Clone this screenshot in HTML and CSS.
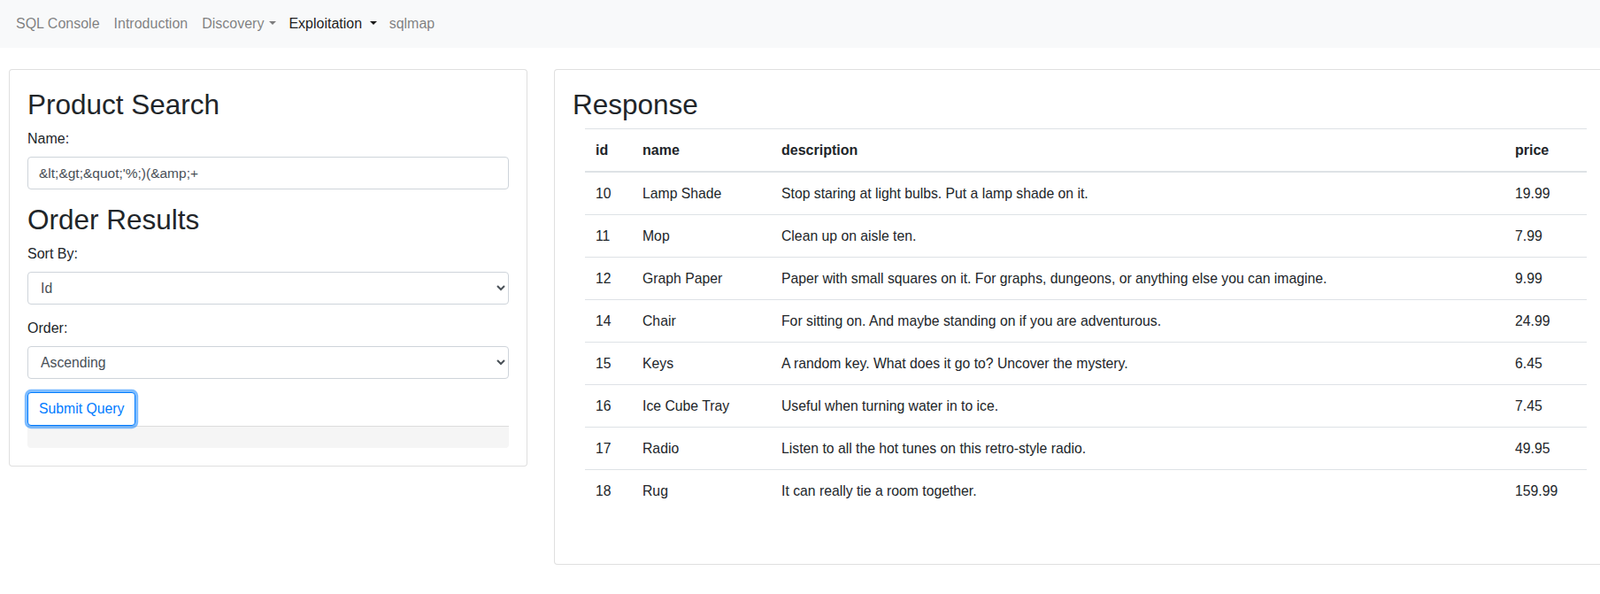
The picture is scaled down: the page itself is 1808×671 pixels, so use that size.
FILE: index.html
```html
<!DOCTYPE html>
<html lang="en">
<head>
<meta charset="utf-8">
<title>Product Search</title>
<link rel="stylesheet" href="styles.css">
</head>
<body>
<nav class="navbar">
  <a class="nav-link" href="#">SQL Console</a>
  <a class="nav-link" href="#">Introduction</a>
  <a class="nav-link dropdown" href="#">Discovery</a>
  <a class="nav-link dropdown active" href="#">Exploitation</a>
  <a class="nav-link" href="#">sqlmap</a>
</nav>
<main class="main">
  <section class="card card-left">
    <h2 class="title">Product Search</h2>
    <div class="form-group">
      <label class="label" for="name">Name:</label>
      <input class="form-control" id="name" type="text" value="&amp;lt;&amp;gt;&amp;quot;'%;)(&amp;amp;+">
    </div>
    <h2 class="title">Order Results</h2>
    <div class="form-group">
      <label class="label" for="sort">Sort By:</label>
      <select class="form-control select" id="sort">
        <option>Id</option>
        <option>Name</option>
        <option>Description</option>
        <option>Price</option>
      </select>
    </div>
    <div class="form-group">
      <label class="label" for="order">Order:</label>
      <select class="form-control select" id="order">
        <option>Ascending</option>
        <option>Descending</option>
      </select>
    </div>
    <button class="btn-submit" type="button">Submit Query</button>
    <div class="query-out"></div>
  </section>
  <section class="card card-right">
    <h2 class="title">Response</h2>
    <div class="table-wrap">
      <table class="table">
        <colgroup>
          <col class="c-id"><col class="c-name"><col class="c-desc"><col class="c-price">
        </colgroup>
        <thead>
          <tr><th>id</th><th>name</th><th>description</th><th>price</th></tr>
        </thead>
        <tbody>
          <tr><td>10</td><td>Lamp Shade</td><td>Stop staring at light bulbs. Put a lamp shade on it.</td><td>19.99</td></tr>
          <tr><td>11</td><td>Mop</td><td>Clean up on aisle ten.</td><td>7.99</td></tr>
          <tr><td>12</td><td>Graph Paper</td><td>Paper with small squares on it. For graphs, dungeons, or anything else you can imagine.</td><td>9.99</td></tr>
          <tr><td>14</td><td>Chair</td><td>For sitting on. And maybe standing on if you are adventurous.</td><td>24.99</td></tr>
          <tr><td>15</td><td>Keys</td><td>A random key. What does it go to? Uncover the mystery.</td><td>6.45</td></tr>
          <tr><td>16</td><td>Ice Cube Tray</td><td>Useful when turning water in to ice.</td><td>7.45</td></tr>
          <tr><td>17</td><td>Radio</td><td>Listen to all the hot tunes on this retro-style radio.</td><td>49.95</td></tr>
          <tr><td>18</td><td>Rug</td><td>It can really tie a room together.</td><td>159.99</td></tr>
        </tbody>
      </table>
    </div>
  </section>
</main>
</body>
</html>
```

FILE: styles.css
```css
html, body {
  margin: 0;
  padding: 0;
  overflow: hidden;
}
body {
  font-family: "Liberation Sans", Arial, sans-serif;
  font-size: 16px;
  line-height: 1.5;
  color: #212529;
  background: #fff;
}
*, *::before, *::after { box-sizing: border-box; }

.navbar {
  display: flex;
  align-items: center;
  height: 54px;
  padding: 0 10px;
  background: #f8f9fa;
}
.nav-link {
  display: block;
  padding: 0 8px;
  line-height: 24px;
  color: rgba(0, 0, 0, 0.5);
  text-decoration: none;
}
.nav-link.active { color: rgba(0, 0, 0, 0.9); }
.nav-link.dropdown { padding-right: 6px; }
.nav-link.dropdown::after {
  content: "";
  display: inline-block;
  margin-left: 6px;
  vertical-align: 4px;
  border-top: 4.8px solid;
  border-right: 4.8px solid transparent;
  border-left: 4.8px solid transparent;
  border-bottom: 0;
}
.nav-link.dropdown.active::after { margin-left: 8.5px; }

.main {
  display: flex;
  align-items: flex-start;
  gap: 30px;
  padding: 24px 0 0 10px;
}
.card {
  flex-shrink: 0;
  border: 1px solid rgba(0, 0, 0, 0.125);
  border-radius: 4px;
  background: #fff;
  padding: 20px;
}
.card-left { width: 586px; }
.card-right { width: 1202px; padding-bottom: 59px; }

.title {
  margin: 0 0 8px;
  font-size: 31.5px;
  font-weight: 500;
  line-height: 38px;
}
.form-group { margin-bottom: 15px; }
.label {
  display: inline-block;
  margin-bottom: 8px;
}
.form-control {
  display: block;
  width: 100%;
  height: 37px;
  padding: 6px 12px;
  font-family: inherit;
  font-size: 15.5px;
  line-height: 1.5;
  color: #495057;
  background: #fff;
  border: 1px solid #ced4da;
  border-radius: 4px;
}
.select {
  padding-left: 10px;
  font-size: 15.75px;
}
.btn-submit {
  display: block;
  height: 38px;
  padding: 6px 12px;
  font-family: inherit;
  font-size: 15.75px;
  line-height: 1.5;
  color: #007bff;
  background: #fff;
  border: 1px solid #007bff;
  border-radius: 4px;
  box-shadow: 0 0 0 3.2px rgba(0, 123, 255, 0.5);
  outline: none;
  position: relative;
  z-index: 1;
}
.query-out {
  height: 25px;
  border-top: 1px solid #dcdcdc;
  background: #f5f5f5;
  border-radius: 0 0 4px 4px;
}

.table-wrap { padding: 0 14px; }
.table {
  width: 1132px;
  border-collapse: collapse;
  table-layout: fixed;
  color: #212529;
}
.c-id { width: 53px; }
.c-name { width: 157px; }
.c-desc { width: 829px; }
.c-price { width: 93px; }
.table th, .table td {
  padding: 12px;
  text-align: left;
  vertical-align: top;
  border-top: 1px solid #dee2e6;
  line-height: 23px;
}
.table td { font-size: 15.75px; }
.table th {
  font-weight: bold;
  border-bottom: 2px solid #dee2e6;
}
```
